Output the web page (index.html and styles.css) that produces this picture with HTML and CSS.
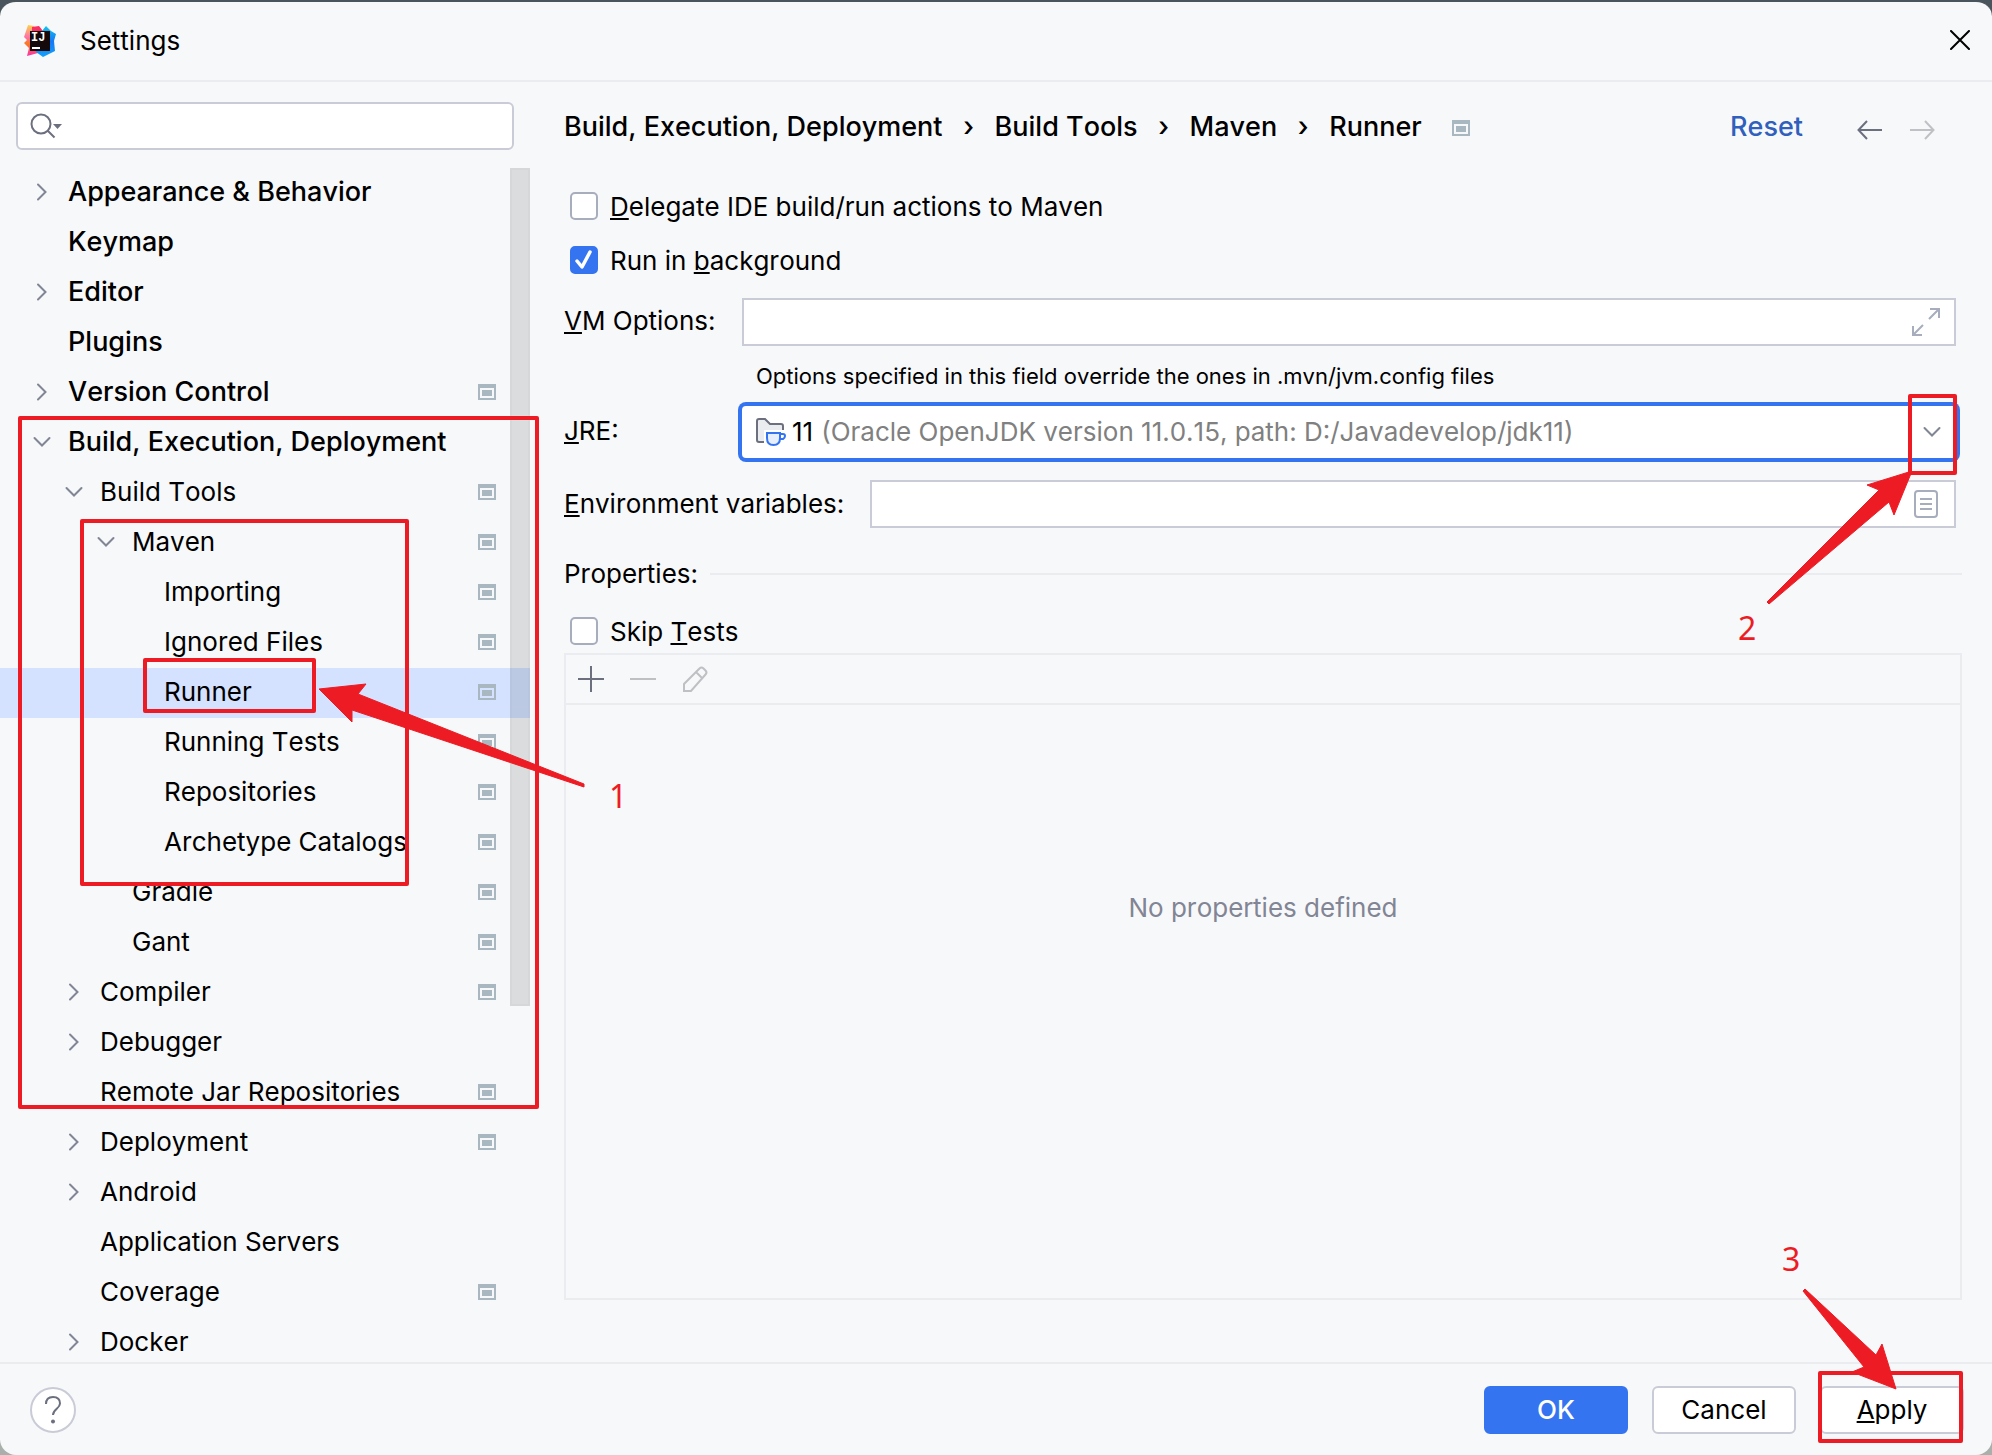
FILE: index.html
```html
<!DOCTYPE html>
<html lang="en">
<head>
<meta charset="utf-8">
<meta name="viewport" content="width=device-width, initial-scale=1">
<title>Settings</title>
<link rel="stylesheet" href="styles.css">
</head>
<body>
<svg class="sprite" aria-hidden="true">
  <symbol id="right" viewBox="0 0 20 20"><path d="M6 2.5 13.5 10 6 17.500" fill="none" stroke="#818594" stroke-width="2" stroke-linecap="round"/></symbol>
  <symbol id="down" viewBox="0 0 20 20"><path d="M2.500 6 10 13.500 17.500 6" fill="none" stroke="#818594" stroke-width="2" stroke-linecap="round"/></symbol>
  <symbol id="project" viewBox="0 0 18 16"><path fill="#a9b7c0" fill-rule="evenodd" d="M0 0h18v16H0zM2 4v10h14V4z"/><path fill="#a9b7c0" d="M4 6h10v6H4z"/></symbol>
</svg>
<div class="window">
  <header class="titlebar">
    <svg class="logo" viewBox="0 0 32 32" aria-hidden="true">
      <defs>
        <linearGradient id="warm" x1="0" y1="0" x2="0" y2="1"><stop offset="0" stop-color="#fbd34b"/><stop offset=".4" stop-color="#ff6fa8"/><stop offset=".6" stop-color="#fb7a1e"/><stop offset="1" stop-color="#ff2fae"/></linearGradient>
        <linearGradient id="cool" x1="0" y1="0" x2="0" y2="1"><stop offset="0" stop-color="#12c3f0"/><stop offset=".5" stop-color="#1678f5"/><stop offset="1" stop-color="#12a0fb"/></linearGradient>
      </defs>
      <path fill="url(#warm)" d="M4 0 10 1 16 14 14 28 3 31 5 23 0 18 3 15 0 12z"/>
      <path fill="#fc2d62" d="M8 2 15 1 19 6V10H8z"/>
      <path fill="url(#cool)" d="M22 1 27 6 32 9 30 16 31 26 19 32 12 27 18 6z"/>
      <path fill="#140a0c" d="M6 6h20v20H6z"/>
      <text x="7" y="16" class="logo-text">IJ</text>
      <path fill="#fff" d="M8 22h8v2H8z"/>
    </svg>
    <h1 class="title">Settings</h1>
    <button class="icon-button close" aria-label="Close"><svg width="20" height="20" viewBox="0 0 20 20"><path d="M1 1 19 19M19 1 1 19" stroke="#000" stroke-width="2" stroke-linecap="round"/></svg></button>
  </header>

  <div class="body">
    <aside class="sidebar">
      <div class="search">
        <svg width="34" height="26" viewBox="0 0 34 26" aria-hidden="true"><circle cx="11" cy="11" r="9.500" fill="none" stroke="#6c707e" stroke-width="2"/><path d="m17.500 17.500 7 7" stroke="#6c707e" stroke-width="2"/><path d="M23 11h9l-4.500 5z" fill="#6c707e"/></svg>
        <input type="text" aria-label="Search settings">
      </div>
      <nav class="tree" aria-label="Settings pages">
        <ul>
          <li class="row group"><svg class="chevron"><use href="#right"/></svg><a href="#">Appearance &amp; Behavior</a></li>
          <li class="row group leaf"><a href="#">Keymap</a></li>
          <li class="row group"><svg class="chevron"><use href="#right"/></svg><a href="#">Editor</a></li>
          <li class="row group leaf"><a href="#">Plugins</a></li>
          <li class="row group"><svg class="chevron"><use href="#right"/></svg><a href="#">Version Control</a><svg class="badge"><use href="#project"/></svg></li>
          <li class="row group"><svg class="chevron"><use href="#down"/></svg><a href="#">Build, Execution, Deployment</a></li>
          <li class="row level-1"><svg class="chevron"><use href="#down"/></svg><a href="#">Build Tools</a><svg class="badge"><use href="#project"/></svg></li>
          <li class="row level-2"><svg class="chevron"><use href="#down"/></svg><a href="#">Maven</a><svg class="badge"><use href="#project"/></svg></li>
          <li class="row level-3 leaf"><a href="#">Importing</a><svg class="badge"><use href="#project"/></svg></li>
          <li class="row level-3 leaf"><a href="#">Ignored Files</a><svg class="badge"><use href="#project"/></svg></li>
          <li class="row level-3 leaf selected"><a href="#" aria-current="page">Runner</a><svg class="badge"><use href="#project"/></svg></li>
          <li class="row level-3 leaf"><a href="#">Running Tests</a><svg class="badge"><use href="#project"/></svg></li>
          <li class="row level-3 leaf"><a href="#">Repositories</a><svg class="badge"><use href="#project"/></svg></li>
          <li class="row level-3 leaf"><a href="#">Archetype Catalogs</a><svg class="badge"><use href="#project"/></svg></li>
          <li class="row level-2 leaf"><a href="#">Gradle</a><svg class="badge"><use href="#project"/></svg></li>
          <li class="row level-2 leaf"><a href="#">Gant</a><svg class="badge"><use href="#project"/></svg></li>
          <li class="row level-1"><svg class="chevron"><use href="#right"/></svg><a href="#">Compiler</a><svg class="badge"><use href="#project"/></svg></li>
          <li class="row level-1"><svg class="chevron"><use href="#right"/></svg><a href="#">Debugger</a></li>
          <li class="row level-1 leaf"><a href="#">Remote Jar Repositories</a><svg class="badge"><use href="#project"/></svg></li>
          <li class="row level-1"><svg class="chevron"><use href="#right"/></svg><a href="#">Deployment</a><svg class="badge"><use href="#project"/></svg></li>
          <li class="row level-1"><svg class="chevron"><use href="#right"/></svg><a href="#">Android</a></li>
          <li class="row level-1 leaf"><a href="#">Application Servers</a></li>
          <li class="row level-1 leaf"><a href="#">Coverage</a><svg class="badge"><use href="#project"/></svg></li>
          <li class="row level-1"><svg class="chevron"><use href="#right"/></svg><a href="#">Docker</a></li>
        </ul>
        <div class="scroll-thumb"></div>
      </nav>
    </aside>

    <main class="page">
      <div class="page-head">
        <ol class="crumbs">
          <li>Build, Execution, Deployment</li>
          <li class="sep" aria-hidden="true">›</li>
          <li>Build Tools</li>
          <li class="sep" aria-hidden="true">›</li>
          <li>Maven</li>
          <li class="sep" aria-hidden="true">›</li>
          <li>Runner</li>
        </ol>
        <svg class="badge"><use href="#project"/></svg>
        <a class="reset" href="#">Reset</a>
        <div class="history">
          <button class="icon-button" aria-label="Back"><svg width="26" height="20" viewBox="0 0 26 20"><path d="M25 10H2M10 1 1.500 10 10 19" fill="none" stroke="#6c707e" stroke-width="2"/></svg></button>
          <button class="icon-button" aria-label="Forward" disabled><svg width="26" height="20" viewBox="0 0 26 20"><path d="M1 10h23M16 1l8.500 9L16 19" fill="none" stroke="#c0c1c5" stroke-width="2"/></svg></button>
        </div>
      </div>

      <form class="form">
        <label class="check"><input type="checkbox"><span><u>D</u>elegate IDE build/run actions to Maven</span></label>
        <label class="check"><input type="checkbox" checked><span>Run in <u>b</u>ackground</span></label>
        <div class="fields">
          <label for="vm"><u>V</u>M Options:</label>
          <div class="field">
            <input id="vm" type="text">
            <svg width="28" height="28" viewBox="0 0 28 28" aria-hidden="true"><path d="M17 11 27 1M18 1h9v9M11 17 1 27M1 18v9h9" fill="none" stroke="#a8adbd" stroke-width="2"/></svg>
          </div>
          <p class="hint">Options specified in this field override the ones in .mvn/jvm.config files</p>
          <label for="jre"><u>J</u>RE:</label>
          <div class="combo">
            <svg class="jdk" width="30" height="28" viewBox="0 0 30 28" aria-hidden="true"><path d="M8 24H3q-2 0-2-2V3q0-2 2-2h6l5 5h11q2 0 2 2v4" fill="#ebecf0" stroke="#6c707e" stroke-width="2"/><path d="M8 12h20v14H8z" fill="#fff"/><path d="M11 15h13v5q0 7-6.500 7T11 20z" fill="#e7effd" stroke="#3574f0" stroke-width="2"/><path d="M24 16h3q2 0 2 2t-2 3h-3" fill="none" stroke="#3574f0" stroke-width="2"/></svg>
            <span>11</span>
            <select id="jre"><option>(Oracle OpenJDK version 11.0.15, path: D:/Javadevelop/jdk11)</option></select>
            <svg class="chevron"><use href="#down"/></svg>
          </div>
        </div>
        <div class="env">
          <label for="env"><u>E</u>nvironment variables:</label>
          <div class="field">
            <input id="env" type="text">
            <svg width="28" height="28" viewBox="0 0 28 28" aria-hidden="true"><rect x="3" y="1" width="22" height="26" rx="3" fill="none" stroke="#a8adbd" stroke-width="2"/><path d="M8 9h12M8 14h12M8 19h12" stroke="#a8adbd" stroke-width="2"/></svg>
          </div>
        </div>
        <h2 class="section">Properties:</h2>
        <label class="check"><input type="checkbox"><span>Skip <u>T</u>ests</span></label>
        <section class="properties" aria-label="Properties">
          <div class="toolbar">
            <button type="button" class="icon-button" aria-label="Add"><svg width="28" height="28" viewBox="0 0 28 28"><path d="M1 14h26M14 1v26" stroke="#6c707e" stroke-width="2"/></svg></button>
            <button type="button" class="icon-button" aria-label="Remove" disabled><svg width="28" height="28" viewBox="0 0 28 28"><path d="M1 14h26" stroke="#bfc0c4" stroke-width="2"/></svg></button>
            <button type="button" class="icon-button" aria-label="Edit" disabled><svg width="28" height="28" viewBox="0 0 28 28"><path d="M3 26v-7L18.500 3.500q2-2 4 0l2 2q2 2 0 4L10 26zM15.500 7.500l6 6" fill="none" stroke="#bfc0c4" stroke-width="2"/></svg></button>
          </div>
          <p class="empty">No properties defined</p>
        </section>
      </form>
    </main>
  </div>

  <footer class="footer">
    <button class="help" aria-label="Help"><svg width="18" height="28" viewBox="0 0 18 28"><path d="M2 8q0-7 7-7t7 6.500c0 5-7 5.500-7 11.500" fill="none" stroke="#6c707e" stroke-width="2"/><circle cx="9" cy="25.500" r="2" fill="#6c707e"/></svg></button>
    <button class="button primary">OK</button>
    <button class="button">Cancel</button>
    <button class="button"><u>A</u>pply</button>
  </footer>

  <svg class="marks marks-left" width="660" height="720" viewBox="0 400 660 720">
    <g class="frame"><rect x="20" y="418" width="517" height="689"/><rect x="82" y="521" width="325" height="363"/><rect x="145" y="660" width="169" height="51"/></g>
    <path class="arrow" d="M319 689 366 684 358 694 584 784V787L352 710V722z"/>
    <text x="609" y="808">1</text>
  </svg>
  <svg class="marks marks-top" width="260" height="280" viewBox="1732 380 260 280">
    <g class="frame"><rect x="1910" y="396" width="45" height="77"/></g>
    <path class="arrow" d="M1912 471 1867 485 1879 490 1767 602 1769 604 1889 502 1894 515z"/>
    <text x="1738" y="640">2</text>
  </svg>
  <svg class="marks marks-bottom" width="260" height="235" viewBox="1732 1220 260 235">
    <g class="frame"><rect x="1820" y="1373" width="141" height="68"/></g>
    <path class="arrow" d="M1896 1389 1882 1344 1876 1355 1805 1289 1803 1291 1864 1367 1852 1372z"/>
    <text x="1782" y="1271">3</text>
  </svg>
</div>
</body>
</html>
```
FILE: styles.css
```css
* { box-sizing: border-box; }

body {
  margin: 0;
  background: linear-gradient(#4a545c 50%, #a9b0ab 50%);
  color: #000;
  font-family: Inter, "Liberation Sans", sans-serif;
  font-size: 26px;
  font-kerning: none;
  line-height: 32px;
}

h1, h2, p, ul, ol { margin: 0; padding: 0; font: inherit; font-kerning: none; list-style: none; }
a { color: inherit; text-decoration: none; }
input, select, button { font: inherit; font-kerning: none; color: inherit; }
svg { flex: none; display: block; }

u {
  text-decoration-thickness: 2px;
  text-underline-offset: 2px;
  text-decoration-skip-ink: none;
}

.sprite { position: absolute; width: 0; height: 0; }

.window {
  position: relative;
  display: flex;
  flex-direction: column;
  height: 100vh;
  min-height: 900px;
  border-top: 2px solid #4a545c;
  border-radius: 16px;
  background: #f7f8fa;
  overflow: hidden;
}

.icon-button {
  display: block;
  padding: 0;
  border: 0;
  background: none;
}

/* Title bar */
.titlebar {
  display: flex;
  align-items: center;
  height: 80px;
  padding: 0 22px 0 24px;
  border-bottom: 2px solid #ebecf0;
}
.logo { width: 32px; height: 32px; }
.logo-text { fill: #fff; font: bold 12px "Liberation Mono", monospace; }
.title { margin-left: 24px; }
.close { margin: 0 0 2px auto; }

.body { display: flex; flex: 1; min-height: 0; }

/* Sidebar */
.sidebar {
  display: flex;
  flex: none;
  flex-direction: column;
  width: 530px;
  padding-top: 20px;
}
.search {
  display: flex;
  flex: none;
  align-items: center;
  height: 48px;
  margin: 0 16px 18px;
  padding: 0 12px;
  border: 2px solid #c9ccd6;
  border-radius: 6px;
  background: #fff;
}
.search input { flex: 1; min-width: 0; border: 0; outline: 0; background: none; }

.tree { position: relative; flex: 1; min-height: 0; overflow: hidden; }
.row {
  display: flex;
  align-items: center;
  gap: 16px;
  height: 50px;
  padding: 0 34px 2px 32px;
}
.leaf { padding-left: 68px; }
.level-1 { padding-left: 64px; }
.level-1.leaf { padding-left: 100px; }
.level-2 { padding-left: 96px; }
.level-2.leaf { padding-left: 132px; }
.level-3.leaf { padding-left: 164px; }
.group { font-size: 27px; font-weight: 500; }
.selected { background: #d4e2ff; }
.chevron { width: 20px; height: 20px; }
.badge { width: 18px; height: 16px; }
.row .badge { margin-left: auto; }
.scroll-thumb {
  position: absolute;
  top: 0;
  right: 0;
  width: 20px;
  height: 838px;
  border: 2px solid rgba(0, 0, 0, 0.02);
  background: rgba(0, 0, 0, 0.11);
}

/* Page */
.page {
  display: flex;
  flex: 1;
  flex-direction: column;
  min-width: 0;
  padding: 0 30px 62px 34px;
}
.page-head { display: flex; align-items: center; height: 90px; font-size: 27px; font-weight: 500; }
.crumbs { display: flex; font-weight: inherit; white-space: nowrap; }
.sep { width: 52px; text-align: center; }
.page-head .badge { margin: 2px 0 0 30px; }
.reset { margin-left: auto; color: #315fbd; }
.history { display: flex; gap: 26px; margin: 6px 27px 0 54px; }

.form { display: flex; flex: 1; flex-direction: column; padding-top: 20px; }
.check { display: flex; align-items: center; align-self: flex-start; gap: 12px; height: 28px; margin-left: 6px; }
.check + .check { margin-top: 26px; }
.check span { padding-top: 2px; }
.check input {
  appearance: none;
  width: 28px;
  height: 28px;
  margin: 0;
  border: 2px solid #a8adbd;
  border-radius: 5px;
  background: #fff;
}
.check input:checked {
  border-color: #3574f0;
  background: #3574f0 url("data:image/svg+xml,%3Csvg xmlns='http://www.w3.org/2000/svg' viewBox='0 0 24 24'%3E%3Cpath d='M5 13l5 6L18 4' fill='none' stroke='%23fff' stroke-width='3.500' stroke-linecap='round' stroke-linejoin='round'/%3E%3C/svg%3E") center / 24px no-repeat;
}

.fields {
  display: grid;
  grid-template-columns: 178px 1fr;
  align-items: center;
  margin: 24px 6px 0 0;
}
.fields label { padding-bottom: 2px; }
.field {
  display: flex;
  align-items: center;
  height: 48px;
  padding: 0 14px;
  border: 2px solid #c9ccd6;
  background: #fff;
}
.field input { flex: 1; min-width: 0; border: 0; outline: 0; background: none; }
.hint { grid-column: 2; margin: 14px 0; padding-left: 14px; font-size: 22px; }
.combo {
  display: flex;
  align-items: center;
  height: 52px;
  padding: 0 14px;
  border-radius: 4px;
  background: #fff;
  box-shadow: 0 0 0 4px #3574f0;
}
.combo span { margin: 0 8px 0 6px; }
.combo select {
  flex: 1;
  min-width: 0;
  padding: 0;
  border: 0;
  outline: 0;
  appearance: none;
  background: none;
  color: #808080;
}

.env { display: flex; align-items: center; gap: 26px; margin: 22px 6px 0 0; }
.env .field { flex: 1; }

.section { display: flex; align-items: center; gap: 12px; margin: 30px 0 27px; }
.section::after { content: ""; flex: 1; height: 2px; background: #ebecf0; }

.properties { flex: 1; min-height: 200px; margin-top: 8px; border: 2px solid #ebecf0; }
.toolbar {
  display: flex;
  align-items: center;
  gap: 24px;
  height: 50px;
  padding: 0 11px;
  border-bottom: 2px solid #ebecf0;
}
.empty { padding-top: 187px; color: #818594; text-align: center; }

/* Footer */
.footer {
  display: flex;
  flex: none;
  align-items: center;
  gap: 24px;
  padding: 22px 28px 21px 30px;
  border-top: 2px solid #ebecf0;
}
.help {
  display: grid;
  place-items: center;
  width: 46px;
  height: 46px;
  margin-right: auto;
  padding: 0;
  border: 2px solid #c9ccd6;
  border-radius: 50%;
  background: #fff;
}
.button {
  width: 144px;
  height: 48px;
  padding: 0;
  border: 2px solid #c9ccd6;
  border-radius: 6px;
  background: #fff;
}
.primary { border-color: #3574f0; background: #3574f0; color: #fff; font-weight: 500; }

/* Red step marks drawn over the dialog */
.marks { position: absolute; pointer-events: none; }
.marks-left { top: 398px; left: 0; }
.marks-top { top: 378px; right: 0; }
.marks-bottom { right: 0; bottom: 0; }
.marks text { fill: #ed1c24; font: 32px "Noto Sans", sans-serif; }
.frame { fill: none; stroke: #ed1c24; stroke-width: 4; stroke-linejoin: round; }
.arrow { fill: #ed1c24; stroke: #ed1c24; stroke-linejoin: round; }
```
